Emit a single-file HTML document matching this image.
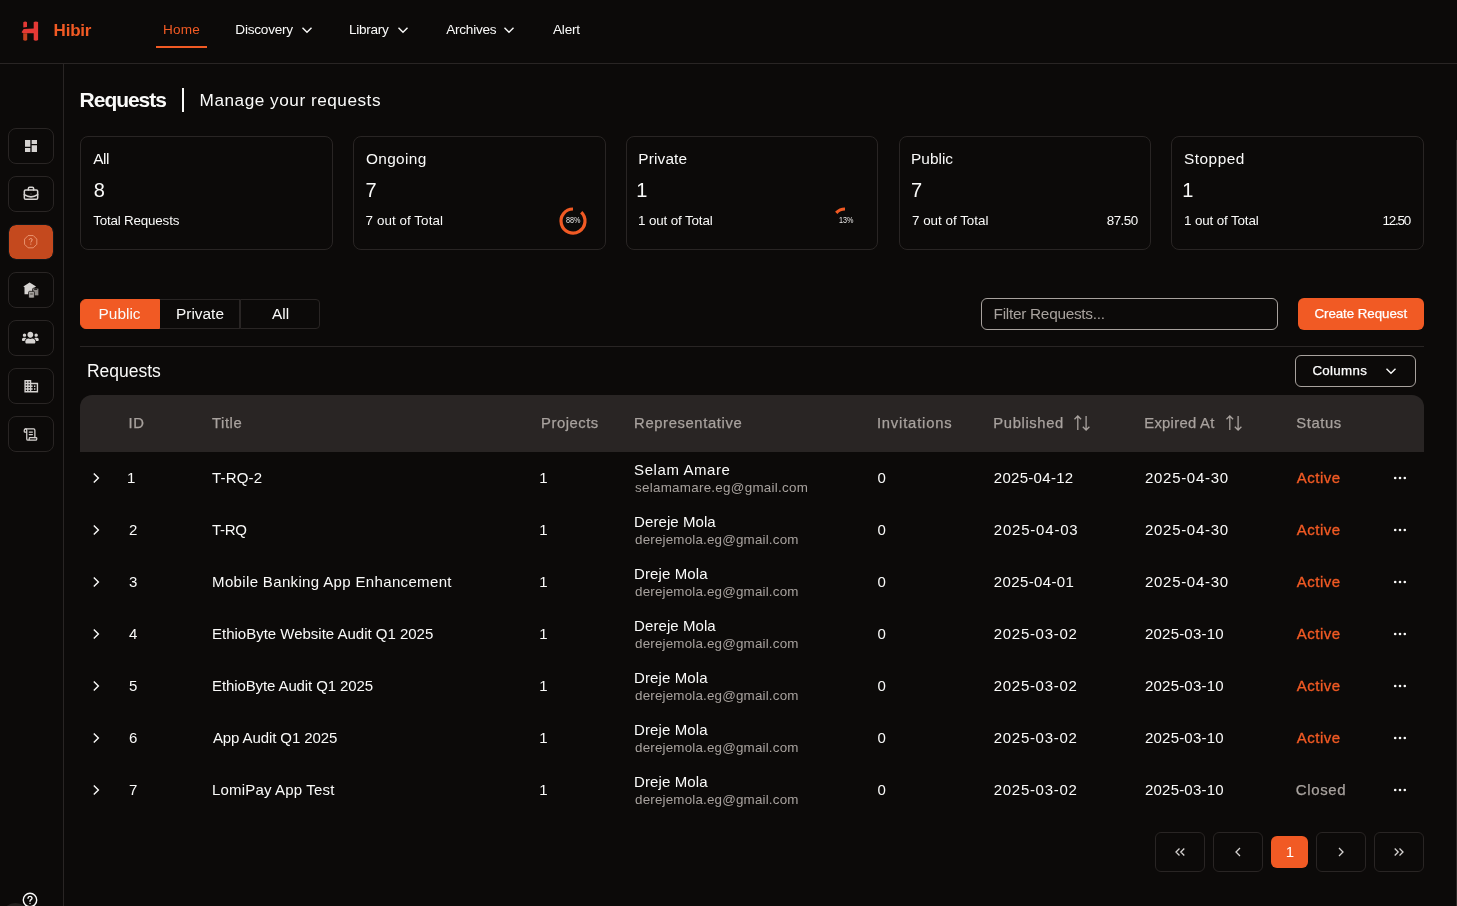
<!DOCTYPE html>
<html lang="en">
<head>
<meta charset="utf-8">
<title>Hibir - Requests</title>
<style>
*{box-sizing:border-box;margin:0;padding:0}
html,body{width:1457px;height:906px;overflow:hidden;background:#0c0a09}
#app{position:absolute;left:0;top:0;width:1457px;height:906px;overflow:hidden;will-change:transform}
body{font-family:"Liberation Sans",sans-serif;color:#fafaf9;position:relative;font-size:14px;line-height:1}
.abs{position:absolute;white-space:nowrap}
svg{position:absolute;overflow:visible}
#topnav{position:absolute;left:0;top:0;width:1457px;height:64px;border-bottom:1px solid #292524}
#sidebar{position:absolute;left:0;top:64px;width:64px;height:842px;border-right:1px solid #292524}
#main{position:absolute;left:64px;top:64px;width:1393px;height:842px}
nav,section{display:contents}
a{color:inherit;text-decoration:none}
h1,h2,p{font-weight:400;font-size:inherit}
.brand{font-size:17px;font-weight:700;color:#f15a24;line-height:20px}
.nav{font-size:13.600px;line-height:20px;color:#fafaf9}
.nav.on{color:#f15a24}
.underline{left:156px;top:46px;width:51px;height:2px;background:#f15a24}
.sbtn{position:absolute;left:8px;width:46px;height:36px;border:1px solid #292524;border-radius:8px}
.sbtn.on{background:#c4491e;background-clip:padding-box;border-color:#11171a}
.h1{font-size:21px;line-height:24px;font-weight:700}
.hdiv{width:2px;height:24px;background:#fafaf9}
.h2{font-size:17.200px;line-height:24px}
.card{position:absolute;width:253px;height:114px;border:1px solid #292524;border-radius:8px}
.tab{position:absolute;height:30px;width:80px;font-size:15px;line-height:28px;text-align:center;border:1px solid #292524;white-space:nowrap}
.tab.on{background:#f15a24;border-color:#f15a24;border-radius:6px 0 0 6px}
.filter{width:297px;height:32px;border:1px solid #a8a29e;border-radius:6px;padding-left:12px;font-size:14px;line-height:30px;color:#a8a29e}
.create{width:126px;height:32px;border-radius:6px;background:#f15a24;color:#fff;font-size:13px;line-height:32px;text-align:center}
.hr{width:1344px;height:1px;background:#292524}
.lbl{font-size:17.500px;line-height:24px}
.cols{width:121px;height:32px;border:1px solid #a8a29e;border-radius:6px;font-size:13px;line-height:30px;padding-left:17px}
#thead{position:absolute;width:1344px;height:57px;background:#292524;border-radius:12px 12px 0 0}
.th{font-size:14.800px;line-height:20px;color:#a8a29e;-webkit-text-stroke:.250px #a8a29e}
.row{position:absolute;width:1344px;height:52px}
.act{color:#f15a24;-webkit-text-stroke:.350px #f15a24}
.cls{color:#a8a29e;-webkit-text-stroke:.250px #a8a29e}
.pg{position:absolute;top:768px;width:50px;height:40px;border:1px solid #292524;border-radius:6px}
.pg svg{left:16px;top:11px;width:16px;height:16px}
.pg.on{background:#f15a24;border:none;top:772px;width:37px;height:32px;border-radius:6px;text-align:center;font-size:15px;line-height:32px}

.tx{position:absolute;white-space:nowrap}
.ct{font-size:15.400px;line-height:20px}
.cn{font-size:20px;line-height:28px}
.cs{font-size:13.400px;line-height:16px}
.tabt{font-size:15.400px;line-height:20px}
.filt{font-size:15.400px;line-height:20px;color:#a8a29e}
.btnt{font-size:13.300px;line-height:20px;color:#fff;-webkit-text-stroke:.250px #fff}
.td{font-size:15px;line-height:20px}
.em{font-size:13.400px;line-height:16px;color:#a8a29e}
.pgt{font-size:15px;line-height:16px;color:#fff}
.chev{left:8px;top:18px;width:16px;height:16px}
.dots{left:1312px;top:18px;width:16px;height:16px}
.scr{left:1456px;top:140px;width:1px;height:766px;background:#2e2a28}
.pct{font-size:9.500px;line-height:12px;color:#e7e5e4;transform:scaleX(.760);transform-origin:0 0}
</style>
</head>
<body>
<div id="app">
<header id="topnav">
<svg style="left:21px;top:21px;width:20px;height:20px" viewBox="0 0 20 20"><path d="M2.300 1.200c1.200-.9 2.900-.8 3.700.1v4.800L2.300 6.600z" fill="#e53935"/><path d="M.5 11.300l2.200-3.400L13 7.500v4.800H2.200z" fill="#e53935"/><path d="M12.700 1c1.200-.8 3.200-.8 4.400 0v18c-1.200.9-3.200.9-4.400 0z" fill="#e53935"/><path d="M2.200 12.300h4v6.800c-1 .8-2.900.8-4 0z" fill="#c4411f"/></svg>
<div id="brand" class="tx brand" style="left:53.6px;top:21px;letter-spacing:-0.23px">Hibir</div>
<nav>
<a id="n1" class="tx nav on" style="left:163.1px;top:20px;letter-spacing:0.15px">Home</a>
<div class="abs underline"></div>
<a id="n2" class="tx nav" style="left:235.3px;top:20px;letter-spacing:-0.23px">Discovery</a>
<svg style="left:298.500px;top:22px;width:16px;height:16px" viewBox="0 0 16 16"><path d="M3.500 5.800L8 10.300l4.500-4.500" fill="none" stroke="#fafaf9" stroke-width="1.400"/></svg>
<a id="n3" class="tx nav" style="left:349.1px;top:20px;letter-spacing:-0.3px">Library</a>
<svg style="left:394.500px;top:22px;width:16px;height:16px" viewBox="0 0 16 16"><path d="M3.500 5.800L8 10.300l4.500-4.500" fill="none" stroke="#fafaf9" stroke-width="1.400"/></svg>
<a id="n4" class="tx nav" style="left:446.25px;top:20px;letter-spacing:-0.26px">Archives</a>
<svg style="left:501px;top:22px;width:16px;height:16px" viewBox="0 0 16 16"><path d="M3.500 5.800L8 10.300l4.500-4.500" fill="none" stroke="#fafaf9" stroke-width="1.400"/></svg>
<a id="n5" class="tx nav" style="left:553px;top:20px;letter-spacing:-0.22px">Alert</a>
</nav>
</header>
<aside id="sidebar">
<div class="sbtn" style="top:64px"><svg style="left:14px;top:9px;width:16px;height:16px" viewBox="0 0 24 24"><path fill="#d6d3d1" d="M3 13h8V3H3v10zm0 8h8v-6H3v6zm10 0h8V11h-8v10zm0-18v6h8V3h-8z"/></svg></div>
<div class="sbtn" style="top:112px"><svg style="left:14px;top:9px;width:16px;height:16px" viewBox="0 0 24 24" fill="none" stroke="#d6d3d1" stroke-width="2.300" stroke-linecap="round" stroke-linejoin="round"><path d="M12 12h.01" stroke-width="1"/><path d="M16 6V4a2 2 0 0 0-2-2h-4a2 2 0 0 0-2 2v2"/><path d="M22 13a18.150 18.150 0 0 1-20 0"/><rect width="20" height="14" x="2" y="6" rx="2"/></svg></div>
<div class="sbtn on" style="top:160px"><svg style="left:14.8px;top:9.8px;width:13.400px;height:13.400px" viewBox="0 0 14 14" fill="none" stroke="#f3a987" stroke-width="0.800"><path d="M4.300.600h5.400l3.700 3.700v5.400l-3.700 3.700H4.300L.600 9.700V4.300z"/><path d="M5.500 5.300c0-1 .7-1.600 1.600-1.600s1.500.6 1.500 1.400c0 1.200-1.500 1.300-1.500 2.700" stroke-width="1"/><path d="M7.100 9v1.100" stroke-width="1"/></svg></div>
<div class="sbtn" style="top:208px"><svg style="left:14px;top:9px;width:17px;height:17px" viewBox="0 0 17 17"><path d="M6.600.600L.300 4.400l1.200.8v7h10v-7l1.600-.8z" fill="#d6d3d1"/><rect x="9.600" y="6.200" width="6.200" height="7.600" rx="1" fill="#8f8b88" stroke="#0c0a09" stroke-width=".800"/><path d="M11.200 7.500h3" stroke="#1c1917" stroke-width=".900"/><rect x="5.600" y="9.300" width="5.800" height="6.800" rx="1" fill="#a8a4a1" stroke="#0c0a09" stroke-width=".800"/><path d="M7.200 12h2.600" stroke="#44403c" stroke-width="1"/></svg></div>
<div class="sbtn" style="top:256px"><svg style="left:13.300px;top:9.900px;width:16.700px;height:13.360px" viewBox="0 0 640 512"><path fill="#d6d3d1" d="M96 224c35.300 0 64-28.700 64-64s-28.700-64-64-64-64 28.700-64 64 28.700 64 64 64zm448 0c35.300 0 64-28.700 64-64s-28.700-64-64-64-64 28.700-64 64 28.700 64 64 64zm32 32h-64c-17.600 0-33.500 7.100-45.100 18.600 40.300 22.100 68.900 62 75.100 109.400h66c17.700 0 32-14.300 32-32v-32c0-35.300-28.700-64-64-64zm-256 0c61.900 0 112-50.100 112-112S381.900 32 320 32 208 82.100 208 144s50.100 112 112 112zm76.800 32h-8.300c-20.800 10-43.900 16-68.500 16s-47.600-6-68.500-16h-8.300C179.600 288 128 339.600 128 403.200V432c0 26.500 21.500 48 48 48h288c26.500 0 48-21.500 48-48v-28.800c0-63.600-51.600-115.200-115.200-115.200zm-223.700-13.400C161.500 263.100 145.600 256 128 256H64c-35.300 0-64 28.700-64 64v32c0 17.700 14.300 32 32 32h65.900c6.300-47.400 34.900-87.300 75.200-109.400z"/></svg></div>
<div class="sbtn" style="top:304px"><svg style="left:13.500px;top:8.800px;width:16.500px;height:16.500px" viewBox="0 0 24 24"><path fill="#d6d3d1" d="M12 7V3H2v18h20V7H12zM6 19H4v-2h2v2zm0-4H4v-2h2v2zm0-4H4V9h2v2zm0-4H4V5h2v2zm4 12H8v-2h2v2zm0-4H8v-2h2v2zm0-4H8V9h2v2zm0-4H8V5h2v2zm10 12h-8v-2h2v-2h-2v-2h2v-2h-2V9h8v10zm-2-8h-2v2h2v-2zm0 4h-2v2h2v-2z"/></svg></div>
<div class="sbtn" style="top:352px"><svg style="left:14.100px;top:9.950px;width:15px;height:15px" viewBox="0 0 24 24" fill="none" stroke="#d6d3d1" stroke-width="2" stroke-linecap="round" stroke-linejoin="round"><path d="M15 12h-5"/><path d="M15 8h-5"/><path d="M19 17V5a2 2 0 0 0-2-2H4"/><path d="M8 21h12a2 2 0 0 0 2-2v-1a1 1 0 0 0-1-1H11a1 1 0 0 0-1 1v1a2 2 0 1 1-4 0V5a2 2 0 1 0-4 0v2a1 1 0 0 0 1 1h3"/></svg></div>
<div class="abs" style="left:1px;top:838.5px;width:29px;height:29px;border-radius:50%;background:#221f1d"></div>
<svg style="left:22px;top:827.8px;width:16px;height:16px" viewBox="0 0 16 16" fill="none" stroke="#fafaf9" stroke-width="1.400" stroke-linecap="round"><circle cx="8" cy="8" r="6.700" fill="#0c0a09"/><path d="M6 6.200c.2-1.200 1-1.800 2-1.800 1.200 0 2 .8 2 1.800 0 1.400-2 1.500-2 3"/><path d="M8 11.500v.100"/></svg>
</aside>
<main id="main">
<h1 id="h1" class="tx h1" style="left:15.6px;top:24px;letter-spacing:-1.03px">Requests</h1>
<div class="abs hdiv" style="left:118px;top:24px"></div>
<p id="h2" class="tx h2" style="left:135.6px;top:24.4px;letter-spacing:0.52px">Manage your requests</p>
<section id="cards">
<div class="card" style="left:16px;top:72px;width:253px">
<div id="ct0" class="tx ct" style="left:12.25px;top:12px;letter-spacing:-0.45px">All</div>
<div id="cn0" class="tx cn" style="left:12.75px;top:39px">8</div>
<div id="cs0" class="tx cs" style="left:12.25px;top:76px;letter-spacing:-0.19px">Total Requests</div>
</div>
<div class="card" style="left:289px;top:72px;width:253px">
<div id="ct1" class="tx ct" style="left:12px;top:12px;letter-spacing:0.34px">Ongoing</div>
<div id="cn1" class="tx cn" style="left:11.58px;top:39px">7</div>
<div id="cs1" class="tx cs" style="left:11.58px;top:76px;letter-spacing:0.07px">7 out of Total</div>
<svg style="left:205px;top:69.500px;width:28px;height:28px" viewBox="0 0 28 28"><path d="M14 2A12 12 0 1 0 22.210 5.250" fill="none" stroke="#f15a24" stroke-width="3.200"/></svg>
<div id="pc1" class="tx pct" style="left:211.5px;top:77px">88%</div>
</div>
<div class="card" style="left:562px;top:72px;width:252px">
<div id="ct2" class="tx ct" style="left:11.29px;top:12px;letter-spacing:0.15px">Private</div>
<div id="cn2" class="tx cn" style="left:9.35px;top:39px">1</div>
<div id="cs2" class="tx cs" style="left:11.1px;top:76px;letter-spacing:-0.14px">1 out of Total</div>
<svg style="left:204px;top:69.500px;width:28px;height:28px" viewBox="0 0 28 28"><path d="M14 2A12 12 0 0 0 5.250 5.790" fill="none" stroke="#f15a24" stroke-width="3.200"/></svg>
<div id="pc2" class="tx pct" style="left:211.5px;top:77px">13%</div>
</div>
<div class="card" style="left:835px;top:72px;width:252px">
<div id="ct3" class="tx ct" style="left:11.1px;top:12px">Public</div>
<div id="cn3" class="tx cn" style="left:11.1px;top:39px">7</div>
<div id="cs3" class="tx cs" style="left:12px;top:76px">7 out of Total</div>
<div id="cv3" class="tx cs" style="left:206.75px;top:76px;letter-spacing:-0.51px">87.50</div>
</div>
<div class="card" style="left:1107px;top:72px;width:253px">
<div id="ct4" class="tx ct" style="left:12.05px;top:12px;letter-spacing:0.49px">Stopped</div>
<div id="cn4" class="tx cn" style="left:10.3px;top:39px">1</div>
<div id="cs4" class="tx cs" style="left:12.05px;top:76px;letter-spacing:-0.14px">1 out of Total</div>
<div id="cv4" class="tx cs" style="left:210.58px;top:76px;letter-spacing:-1.24px">12.50</div>
</div>
</section>
<section id="toolbar">
<div class="tab on" style="left:16px;top:235px"><span id="tab1" class="tx tabt" style="left:17.58px;top:4px">Public</span></div>
<div class="tab" style="left:96px;top:235px;border-left:none"><span id="tab2" class="tx tabt" style="left:16.05px;top:4px">Private</span></div>
<div class="tab" style="left:176px;top:235px;border-radius:0 4px 4px 0"><span id="tab3" class="tx tabt" style="left:31px;top:4px">All</span></div>
<div class="abs filter" style="left:917px;top:234px"><span id="filter" class="tx filt" style="left:11.6px;top:5px;letter-spacing:-0.29px">Filter Requests...</span></div>
<div class="abs create" style="left:1234px;top:234px"><span id="create" class="tx btnt" style="left:16.42px;top:6px;letter-spacing:-0.03px">Create Request</span></div>
</section>
<div class="abs hr" style="left:16px;top:282px"></div>
<section id="tablewrap">
<h2 id="lbl" class="tx lbl" style="left:22.9px;top:295px">Requests</h2>
<div class="abs cols" style="left:1231px;top:291px"><span id="cols" class="tx btnt" style="left:16.42px;top:5px;letter-spacing:0.33px">Columns</span><svg style="left:87px;top:7px;width:16px;height:16px" viewBox="0 0 16 16"><path d="M3.500 5.800L8 10.300l4.500-4.500" fill="none" stroke="#fafaf9" stroke-width="1.400"/></svg></div>
<div id="thead" style="left:16px;top:331px">
<span id="thID" class="tx th" style="left:48.6px;top:18px;letter-spacing:0.45px">ID</span>
<span id="thTitle" class="tx th" style="left:132.05px;top:18px;letter-spacing:0.56px">Title</span>
<span id="thProjects" class="tx th" style="left:461.1px;top:18px;letter-spacing:0.52px">Projects</span>
<span id="thRep" class="tx th" style="left:554.1px;top:18px;letter-spacing:0.62px">Representative</span>
<span id="thInv" class="tx th" style="left:796.91px;top:18px;letter-spacing:0.81px">Invitations</span>
<span id="thPub" class="tx th" style="left:913.3px;top:18px;letter-spacing:0.62px">Published</span>
<svg style="left:994px;top:20px;width:16px;height:16px" viewBox="0 0 16 16" fill="none" stroke="#a8a29e" stroke-width="1.300"><path d="M3.800 15V1M.500 4.300L3.800 1l3.300 3.300M12.100 1v14M8.800 11.700l3.300 3.300 3.300-3.300"/></svg>
<span id="thExp" class="tx th" style="left:1064.29px;top:18px;letter-spacing:0.28px">Expired At</span>
<svg style="left:1146px;top:20px;width:16px;height:16px" viewBox="0 0 16 16" fill="none" stroke="#a8a29e" stroke-width="1.300"><path d="M3.800 15V1M.500 4.300L3.800 1l3.300 3.300M12.100 1v14M8.800 11.700l3.300 3.300 3.300-3.300"/></svg>
<span id="thStatus" class="tx th" style="left:1216.29px;top:18px;letter-spacing:0.58px">Status</span>
</div>
<div class="row" style="left:16px;top:388px">
<svg class="chev" viewBox="0 0 16 16"><path d="M5.800 3.400L10.400 8l-4.600 4.600" fill="none" stroke="#fafaf9" stroke-width="1.400"/></svg>
<span id="r0id" class="tx td" style="left:47.1px;top:16px">1</span>
<span id="r0ti" class="tx td" style="left:132.05px;top:16px;letter-spacing:0.18px">T-RQ-2</span>
<span id="r0pr" class="tx td" style="left:459.3px;top:16px">1</span>
<span id="r0nm" class="tx td" style="left:554.1px;top:8px;letter-spacing:0.58px">Selam Amare</span>
<span id="r0em" class="tx em" style="left:555px;top:28px;letter-spacing:0.27px">selamamare.eg@gmail.com</span>
<span id="r0in" class="tx td" style="left:797.58px;top:16px">0</span>
<span id="r0pu" class="tx td" style="left:913.75px;top:16px;letter-spacing:0.3px">2025-04-12</span>
<span id="r0ex" class="tx td" style="left:1065px;top:16px;letter-spacing:0.7px">2025-04-30</span>
<span id="r0st" class="tx td act" style="left:1216.75px;top:16px;letter-spacing:0.49px">Active</span>
<svg class="dots" viewBox="0 0 16 16"><circle cx="3.200" cy="8" r="1.300" fill="#fafaf9"/><circle cx="8" cy="8" r="1.300" fill="#fafaf9"/><circle cx="12.800" cy="8" r="1.300" fill="#fafaf9"/></svg>
</div>
<div class="row" style="left:16px;top:440px">
<svg class="chev" viewBox="0 0 16 16"><path d="M5.800 3.400L10.400 8l-4.600 4.600" fill="none" stroke="#fafaf9" stroke-width="1.400"/></svg>
<span id="r1id" class="tx td" style="left:49.05px;top:16px">2</span>
<span id="r1ti" class="tx td" style="left:132.05px;top:16px;letter-spacing:-0.3px">T-RQ</span>
<span id="r1pr" class="tx td" style="left:459.3px;top:16px">1</span>
<span id="r1nm" class="tx td" style="left:554.1px;top:8px;letter-spacing:0.07px">Dereje Mola</span>
<span id="r1em" class="tx em" style="left:555px;top:28px;letter-spacing:0.18px">derejemola.eg@gmail.com</span>
<span id="r1in" class="tx td" style="left:797.58px;top:16px">0</span>
<span id="r1pu" class="tx td" style="left:913.75px;top:16px;letter-spacing:0.8px">2025-04-03</span>
<span id="r1ex" class="tx td" style="left:1065px;top:16px;letter-spacing:0.7px">2025-04-30</span>
<span id="r1st" class="tx td act" style="left:1216.75px;top:16px;letter-spacing:0.49px">Active</span>
<svg class="dots" viewBox="0 0 16 16"><circle cx="3.200" cy="8" r="1.300" fill="#fafaf9"/><circle cx="8" cy="8" r="1.300" fill="#fafaf9"/><circle cx="12.800" cy="8" r="1.300" fill="#fafaf9"/></svg>
</div>
<div class="row" style="left:16px;top:492px">
<svg class="chev" viewBox="0 0 16 16"><path d="M5.800 3.400L10.400 8l-4.600 4.600" fill="none" stroke="#fafaf9" stroke-width="1.400"/></svg>
<span id="r2id" class="tx td" style="left:49.05px;top:16px">3</span>
<span id="r2ti" class="tx td" style="left:132.05px;top:16px;letter-spacing:0.35px">Mobile Banking App Enhancement</span>
<span id="r2pr" class="tx td" style="left:459.3px;top:16px">1</span>
<span id="r2nm" class="tx td" style="left:554.1px;top:8px;letter-spacing:0.1px">Dreje Mola</span>
<span id="r2em" class="tx em" style="left:555px;top:28px;letter-spacing:0.18px">derejemola.eg@gmail.com</span>
<span id="r2in" class="tx td" style="left:797.58px;top:16px">0</span>
<span id="r2pu" class="tx td" style="left:913.75px;top:16px;letter-spacing:0.38px">2025-04-01</span>
<span id="r2ex" class="tx td" style="left:1065px;top:16px;letter-spacing:0.7px">2025-04-30</span>
<span id="r2st" class="tx td act" style="left:1216.75px;top:16px;letter-spacing:0.49px">Active</span>
<svg class="dots" viewBox="0 0 16 16"><circle cx="3.200" cy="8" r="1.300" fill="#fafaf9"/><circle cx="8" cy="8" r="1.300" fill="#fafaf9"/><circle cx="12.800" cy="8" r="1.300" fill="#fafaf9"/></svg>
</div>
<div class="row" style="left:16px;top:544px">
<svg class="chev" viewBox="0 0 16 16"><path d="M5.800 3.400L10.400 8l-4.600 4.600" fill="none" stroke="#fafaf9" stroke-width="1.400"/></svg>
<span id="r3id" class="tx td" style="left:49.05px;top:16px">4</span>
<span id="r3ti" class="tx td" style="left:132.05px;top:16px;letter-spacing:-0.01px">EthioByte Website Audit Q1 2025</span>
<span id="r3pr" class="tx td" style="left:459.3px;top:16px">1</span>
<span id="r3nm" class="tx td" style="left:554.1px;top:8px;letter-spacing:0.07px">Dereje Mola</span>
<span id="r3em" class="tx em" style="left:555px;top:28px;letter-spacing:0.18px">derejemola.eg@gmail.com</span>
<span id="r3in" class="tx td" style="left:797.58px;top:16px">0</span>
<span id="r3pu" class="tx td" style="left:913.75px;top:16px;letter-spacing:0.7px">2025-03-02</span>
<span id="r3ex" class="tx td" style="left:1065px;top:16px;letter-spacing:0.2px">2025-03-10</span>
<span id="r3st" class="tx td act" style="left:1216.75px;top:16px;letter-spacing:0.49px">Active</span>
<svg class="dots" viewBox="0 0 16 16"><circle cx="3.200" cy="8" r="1.300" fill="#fafaf9"/><circle cx="8" cy="8" r="1.300" fill="#fafaf9"/><circle cx="12.800" cy="8" r="1.300" fill="#fafaf9"/></svg>
</div>
<div class="row" style="left:16px;top:596px">
<svg class="chev" viewBox="0 0 16 16"><path d="M5.800 3.400L10.400 8l-4.600 4.600" fill="none" stroke="#fafaf9" stroke-width="1.400"/></svg>
<span id="r4id" class="tx td" style="left:49.05px;top:16px">5</span>
<span id="r4ti" class="tx td" style="left:132.05px;top:16px;letter-spacing:-0.11px">EthioByte Audit Q1 2025</span>
<span id="r4pr" class="tx td" style="left:459.3px;top:16px">1</span>
<span id="r4nm" class="tx td" style="left:554.1px;top:8px;letter-spacing:0.1px">Dreje Mola</span>
<span id="r4em" class="tx em" style="left:555px;top:28px;letter-spacing:0.18px">derejemola.eg@gmail.com</span>
<span id="r4in" class="tx td" style="left:797.58px;top:16px">0</span>
<span id="r4pu" class="tx td" style="left:913.75px;top:16px;letter-spacing:0.7px">2025-03-02</span>
<span id="r4ex" class="tx td" style="left:1065px;top:16px;letter-spacing:0.2px">2025-03-10</span>
<span id="r4st" class="tx td act" style="left:1216.75px;top:16px;letter-spacing:0.49px">Active</span>
<svg class="dots" viewBox="0 0 16 16"><circle cx="3.200" cy="8" r="1.300" fill="#fafaf9"/><circle cx="8" cy="8" r="1.300" fill="#fafaf9"/><circle cx="12.800" cy="8" r="1.300" fill="#fafaf9"/></svg>
</div>
<div class="row" style="left:16px;top:648px">
<svg class="chev" viewBox="0 0 16 16"><path d="M5.800 3.400L10.400 8l-4.600 4.600" fill="none" stroke="#fafaf9" stroke-width="1.400"/></svg>
<span id="r5id" class="tx td" style="left:49.05px;top:16px">6</span>
<span id="r5ti" class="tx td" style="left:132.95px;top:16px;letter-spacing:-0.1px">App Audit Q1 2025</span>
<span id="r5pr" class="tx td" style="left:459.3px;top:16px">1</span>
<span id="r5nm" class="tx td" style="left:554.1px;top:8px;letter-spacing:0.1px">Dreje Mola</span>
<span id="r5em" class="tx em" style="left:555px;top:28px;letter-spacing:0.18px">derejemola.eg@gmail.com</span>
<span id="r5in" class="tx td" style="left:797.58px;top:16px">0</span>
<span id="r5pu" class="tx td" style="left:913.75px;top:16px;letter-spacing:0.7px">2025-03-02</span>
<span id="r5ex" class="tx td" style="left:1065px;top:16px;letter-spacing:0.2px">2025-03-10</span>
<span id="r5st" class="tx td act" style="left:1216.75px;top:16px;letter-spacing:0.49px">Active</span>
<svg class="dots" viewBox="0 0 16 16"><circle cx="3.200" cy="8" r="1.300" fill="#fafaf9"/><circle cx="8" cy="8" r="1.300" fill="#fafaf9"/><circle cx="12.800" cy="8" r="1.300" fill="#fafaf9"/></svg>
</div>
<div class="row" style="left:16px;top:700px">
<svg class="chev" viewBox="0 0 16 16"><path d="M5.800 3.400L10.400 8l-4.600 4.600" fill="none" stroke="#fafaf9" stroke-width="1.400"/></svg>
<span id="r6id" class="tx td" style="left:49.05px;top:16px">7</span>
<span id="r6ti" class="tx td" style="left:132.05px;top:16px;letter-spacing:0.17px">LomiPay App Test</span>
<span id="r6pr" class="tx td" style="left:459.3px;top:16px">1</span>
<span id="r6nm" class="tx td" style="left:554.1px;top:8px;letter-spacing:0.1px">Dreje Mola</span>
<span id="r6em" class="tx em" style="left:555px;top:28px;letter-spacing:0.18px">derejemola.eg@gmail.com</span>
<span id="r6in" class="tx td" style="left:797.58px;top:16px">0</span>
<span id="r6pu" class="tx td" style="left:913.75px;top:16px;letter-spacing:0.7px">2025-03-02</span>
<span id="r6ex" class="tx td" style="left:1065px;top:16px;letter-spacing:0.2px">2025-03-10</span>
<span id="r6st" class="tx td cls" style="left:1215.68px;top:16px;letter-spacing:0.67px">Closed</span>
<svg class="dots" viewBox="0 0 16 16"><circle cx="3.200" cy="8" r="1.300" fill="#fafaf9"/><circle cx="8" cy="8" r="1.300" fill="#fafaf9"/><circle cx="12.800" cy="8" r="1.300" fill="#fafaf9"/></svg>
</div>
</section>
<nav id="pager">
<div class="pg" style="left:1091px"><svg viewBox="0 0 16 16" fill="none" stroke="#d6d3d1" stroke-width="1.300"><path d="M7.500 4.500L4 8l3.500 3.500M12.300 4.500L8.800 8l3.500 3.500"/></svg></div>
<div class="pg" style="left:1149px"><svg viewBox="0 0 16 16" fill="none" stroke="#d6d3d1" stroke-width="1.300"><path d="M10 4L6 8l4 4"/></svg></div>
<div class="pg on" style="left:1207px"><span id="pg1" class="tx pgt" style="left:14.82px;top:8px">1</span></div>
<div class="pg" style="left:1252px"><svg viewBox="0 0 16 16" fill="none" stroke="#d6d3d1" stroke-width="1.300"><path d="M6 4l4 4-4 4"/></svg></div>
<div class="pg" style="left:1310px"><svg viewBox="0 0 16 16" fill="none" stroke="#d6d3d1" stroke-width="1.300"><path d="M3.700 4.500L7.200 8l-3.500 3.500M8.500 4.500L12 8l-3.500 3.500"/></svg></div>
</nav>
</main>
<div class="abs scr"></div>
</div>
</body>
</html>
